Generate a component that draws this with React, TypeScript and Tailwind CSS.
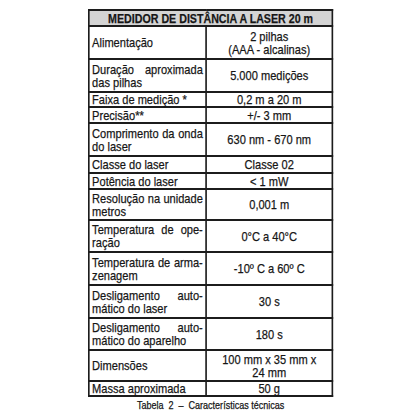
const font = { fontFamily: '"Liberation Sans", Arial, sans-serif' };

type Row = { label: string[]; value: string[]; h: string };

const rows: Row[] = [
  { label: ["Alimentação"], value: ["2 pilhas", "(AAA - alcalinas)"], h: "h-[33px]" },
  { label: ["Duração aproximada", "das pilhas"], value: ["5.000 medições"], h: "h-[33px]" },
  { label: ["Faixa de medição *"], value: ["0,2 m a 20 m"], h: "h-[15px]" },
  { label: ["Precisão**"], value: ["+/- 3 mm"], h: "h-[16px]" },
  { label: ["Comprimento da onda", "do laser"], value: ["630 nm - 670 nm"], h: "h-[33px]" },
  { label: ["Classe do laser"], value: ["Classe 02"], h: "h-[17px]" },
  { label: ["Potência do laser"], value: ["< 1 mW"], h: "h-[16px]" },
  { label: ["Resolução na unidade", "metros"], value: ["0,001 m"], h: "h-[31px]" },
  { label: ["Temperatura de ope-", "ração"], value: ["0°C a 40°C"], h: "h-[32px]" },
  { label: ["Temperatura de arma-", "zenagem"], value: ["-10º C a 60º C"], h: "h-[33px]" },
  { label: ["Desligamento auto-", "mático do laser"], value: ["30 s"], h: "h-[33px]" },
  { label: ["Desligamento auto-", "mático do aparelho"], value: ["180 s"], h: "h-[32px]" },
  { label: ["Dimensões"], value: ["100 mm x 35 mm x", "24 mm"], h: "h-[31px]" },
  { label: ["Massa aproximada"], value: ["50 g"], h: "h-[14px]" },
];

export default function App() {
  return (
    <div className="w-[420px] h-[420px] overflow-hidden bg-white text-[#161616]" style={font}>
      <div className="pt-[9px] pl-[88px]">
        <div className="w-[299px] origin-top-left scale-x-[0.82] [-webkit-text-stroke:0.25px_#161616]">
          <table className="w-[299px] table-fixed border-collapse border-2 border-[#1c1c1c] text-[13.5px] leading-[13px]">
            <colgroup>
              <col className="w-[143px]" />
              <col />
            </colgroup>
            <thead>
              <tr className="h-[16px] bg-[#d4d4d4]">
                <th colSpan={2} className="border-2 border-[#1c1c1c] p-0 text-center text-[13px] font-bold">
                  MEDIDOR DE DISTÂNCIA A LASER 20 m
                </th>
              </tr>
            </thead>
            <tbody>
              {rows.map((r, i) => (
                <tr key={i} className={r.h}>
                  <td className="border-2 border-[#1c1c1c] px-[3px] py-0 align-middle">
                    {r.label.map((l, j) => (
                      <div
                        key={j}
                        className={j < r.label.length - 1 ? "text-justify [text-align-last:justify]" : ""}
                      >
                        {l}
                      </div>
                    ))}
                  </td>
                  <td className="border-2 border-[#1c1c1c] px-[3px] py-0 text-center align-middle">
                    {r.value.map((v, j) => (
                      <div key={j}>{v}</div>
                    ))}
                  </td>
                </tr>
              ))}
            </tbody>
          </table>
          <div className="mt-[2px] text-center text-[11px] leading-[12px]">
            Tabela&nbsp; 2&nbsp; –&nbsp; Características técnicas
          </div>
        </div>
      </div>
    </div>
  );
}
